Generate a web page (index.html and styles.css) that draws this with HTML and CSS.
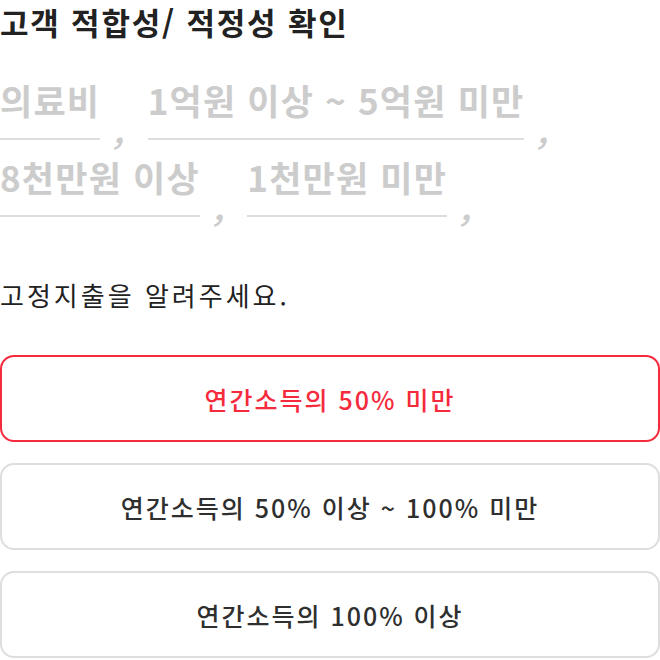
FILE: index.html
```html
<!DOCTYPE html>
<html lang="ko">
<head>
<meta charset="utf-8">
<link rel="stylesheet" href="styles.css">
</head>
<body>
<div class="page">
  <h1 class="title">고객 적합성/ 적정성 확인</h1>
  <div class="blanks">
    <div class="blank"><span class="field">의료비</span><span class="comma">,</span></div>
    <div class="blank"><span class="field">1억원 이상 ~ 5억원 미만</span><span class="comma">,</span></div>
    <div class="blank"><span class="field">8천만원 이상</span><span class="comma">,</span></div>
    <div class="blank"><span class="field">1천만원 미만</span><span class="comma">,</span></div>
  </div>
  <p class="question">고정지출을 알려주세요.</p>
  <div class="options">
    <button class="option selected">연간소득의 50% 미만</button>
    <button class="option">연간소득의 50% 이상 ~ 100% 미만</button>
    <button class="option">연간소득의 100% 이상</button>
  </div>
</div>
</body>
</html>
```
FILE: styles.css
```css
* { box-sizing: border-box; }
html, body { margin: 0; padding: 0; background: #fff; }
body {
  font-family: "Noto Sans CJK KR", "Noto Sans", sans-serif;
  color: #222;
}
.page {
  width: 660px;
  display: flex;
  flex-direction: column;
}
.title {
  margin: 0;
  padding-top: 2px;
  font-size: 31px;
  font-weight: 700;
  line-height: 40px;
  letter-spacing: 1.8px;
  color: #222;
}
.blanks {
  display: flex;
  flex-wrap: wrap;
  column-gap: 20px;
  row-gap: 15px;
  margin-top: 36px;
}
.blank {
  display: flex;
  align-items: flex-end;
  gap: 17px;
}
.field {
  display: block;
  font-size: 35px;
  font-weight: 700;
  line-height: 44px;
  letter-spacing: 1.2px;
  color: #cccccc;
  padding-bottom: 16px;
  border-bottom: 2px solid #dddddd;
}
.comma {
  font-size: 32px;
  font-weight: 700;
  line-height: 34px;
  color: #cccccc;
  margin-bottom: -6px;
  transform: skewX(-14deg);
}
.question {
  margin: 60px 0 0;
  font-size: 26px;
  line-height: 36px;
  letter-spacing: 3px;
  color: #222;
}
.options {
  display: flex;
  flex-direction: column;
  gap: 21px;
  margin-top: 42px;
}
.option {
  height: 87px;
  width: 100%;
  background: #fff;
  border: 2px solid #dedede;
  border-radius: 14px;
  font-family: inherit;
  font-size: 25px;
  font-weight: 500;
  letter-spacing: 2px;
  color: #2f2f2f;
}
.option.selected {
  border-color: #f52a3c;
  color: #f52a3c;
}
```
